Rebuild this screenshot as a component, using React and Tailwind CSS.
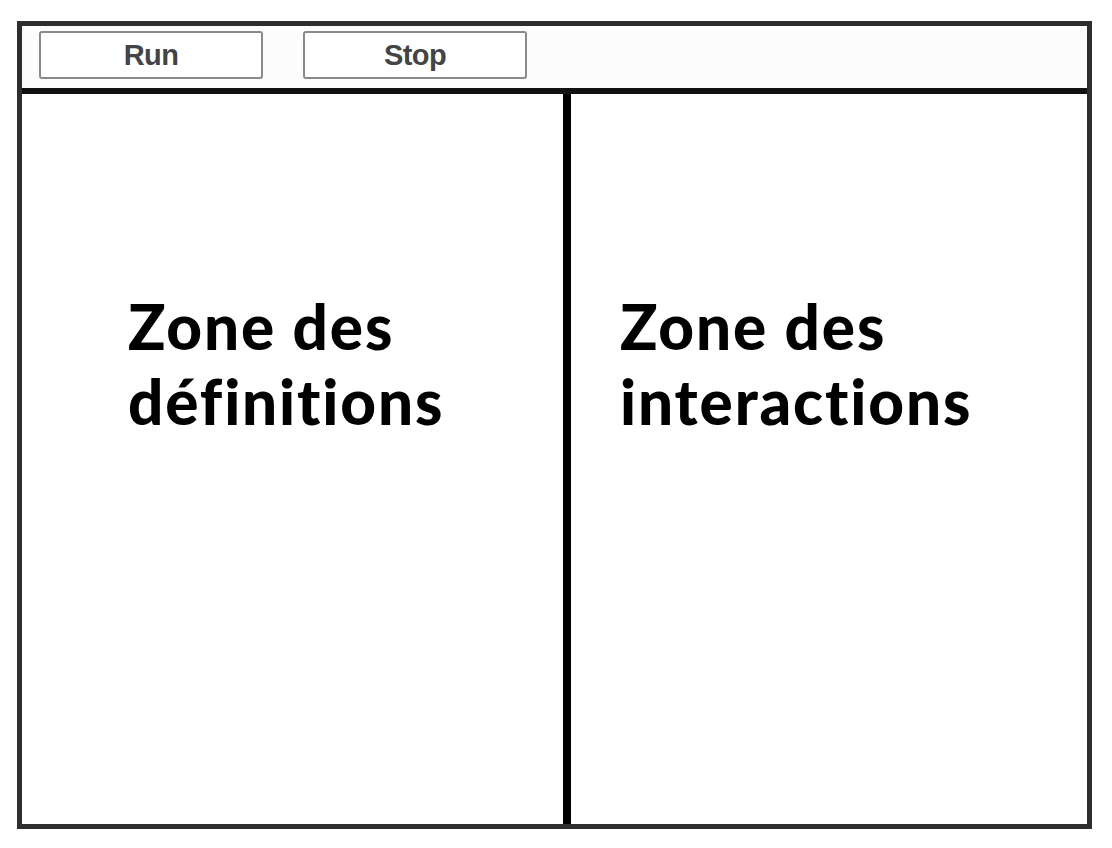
import React from 'react';

const zoneText = 'text-[62px] leading-[75px] font-black text-black tracking-[0.03em] [font-variant-ligatures:none]';
const btn = 'w-[224px] h-[48px] border-2 border-[#8a8a8a] rounded-[3px] bg-white text-[29px] leading-none font-bold text-[#444] tracking-[-0.02em]';

export default function App() {
  return (
    <div className="min-h-screen bg-white pl-[17px] pt-[21px]" style={{ fontFamily: 'Lato, "Open Sans", sans-serif' }}>
      <div className="w-[1075px] h-[808px] border-[5px] border-[#2e2e2e] flex flex-col">
        {/* Toolbar */}
        <div className="h-[68px] shrink-0 border-b-[6px] border-[#111] bg-[#fcfcfc] flex items-center gap-[40px] pl-[17px] pb-[4px]">
          <button className={btn} style={{ fontFamily: '"Liberation Sans", Arial, sans-serif' }}>
            Run
          </button>
          <button className={btn} style={{ fontFamily: '"Liberation Sans", Arial, sans-serif' }}>
            Stop
          </button>
        </div>

        {/* Two zones */}
        <div className="flex-1 flex">
          <div className="w-[541px] pl-[106px] pt-[195px]">
            <p className={zoneText}>Zone des<br />définitions</p>
          </div>
          <div className="w-[8px] bg-black" />
          <div className="flex-1 pl-[49px] pt-[195px]">
            <p className={zoneText}>Zone des<br />interactions</p>
          </div>
        </div>
      </div>
    </div>
  );
}
